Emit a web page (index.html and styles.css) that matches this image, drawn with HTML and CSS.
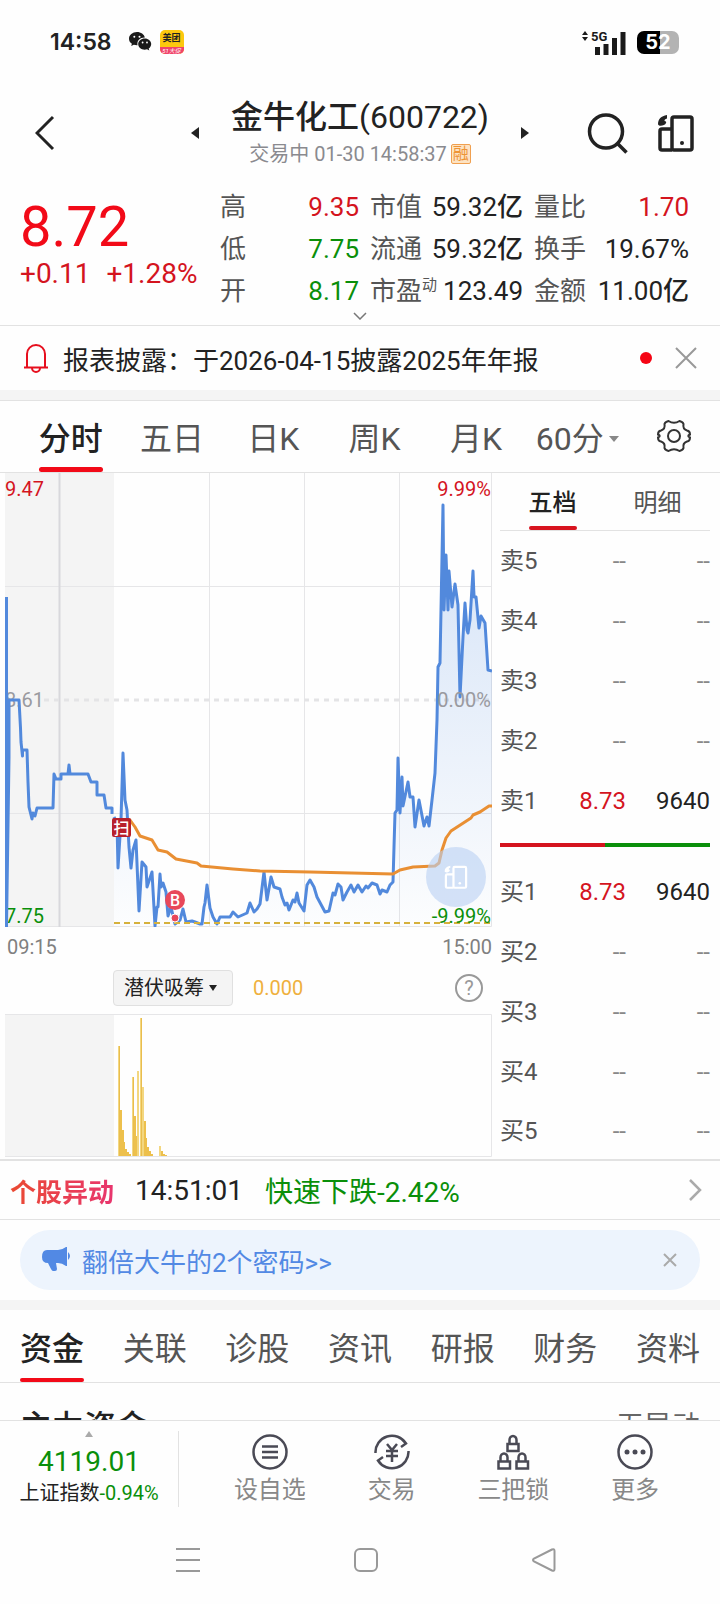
FILE: index.html
```
<!DOCTYPE html>
<html lang="zh-CN">
<head>
    <meta charset="UTF-8">
    <meta name="viewport" content="width=device-width, initial-scale=1.0">
    <title>金牛化工(600722)</title>
    <link rel="stylesheet" href="styles.css">
</head>
<body>
    <div class="status-bar">
        <div class="status-left">
            <span class="clock">14:58</span>
            <svg class="wechat" width="23" height="20" viewBox="0 0 23 20">
                <path d="M8 0C3.500 0 0 3 0 6.700c0 2.100 1.100 3.900 2.900 5.100L2.200 14l2.600-1.300c1 .3 2 .5 3.200.5h.5C7.600 8.700 11 5.500 15.900 5.600 15.200 2.300 11.900 0 8 0z" fill="#1a1a1a"/>
                <path d="M15.700 6.500c-3.700 0-6.500 2.500-6.500 5.600s2.800 5.600 6.500 5.600c.8 0 1.600-.1 2.300-.4l2.300 1.300-.6-2c1.500-1 2.500-2.600 2.500-4.500 0-3.100-2.800-5.600-6.500-5.600z" fill="#1a1a1a"/>
                <circle cx="5.300" cy="4.700" r="1" fill="#fff"/>
                <circle cx="10.500" cy="4.700" r="1" fill="#fff"/>
                <circle cx="13.600" cy="10.500" r=".9" fill="#fff"/>
                <circle cx="18" cy="10.500" r=".9" fill="#fff"/>
            </svg>
            <span class="app-badge"><b>美团</b><i>51大促</i></span>
        </div>
        <div class="status-right">
            <svg width="45" height="27" viewBox="0 0 45 27">
                <path d="M1 6l3-4 3 4zM1 8l3 4 3-4z" fill="#1a1a1a"/>
                <path d="M16.500 26v-8M25 26v-11M33.500 26v-17M42 26V3" stroke="#1a1a1a" stroke-width="5"/>
                <text x="10" y="12" class="net">5G</text>
            </svg>
            <div class="battery"><span>52</span></div>
        </div>
    </div>

    <header class="header">
        <button class="icon-btn back" aria-label="返回">
            <svg width="20" height="36" viewBox="0 0 20 36"><path d="M18 2L2 18l16 16" fill="none" stroke="#222" stroke-width="3"/></svg>
        </button>
        <div class="stock">
            <button class="icon-btn" aria-label="上一只"><svg width="8" height="12" viewBox="0 0 8 12"><path d="M8 0v12L0 6z" fill="#222"/></svg></button>
            <div class="stock-name">
                <h1>金牛化工(600722)</h1>
                <p>交易中 01-30 14:58:37<span class="margin-tag">融</span></p>
            </div>
            <button class="icon-btn" aria-label="下一只"><svg width="8" height="12" viewBox="0 0 8 12"><path d="M0 0v12l8-6z" fill="#222"/></svg></button>
        </div>
        <div class="header-actions">
            <button class="icon-btn" aria-label="搜索">
                <svg width="42" height="42" viewBox="0 0 42 42" fill="none" stroke="#222" stroke-width="3.500"><circle cx="19" cy="19.500" r="16.500"/><path d="M30.500 31.500l9 9"/></svg>
            </button>
            <button class="icon-btn" aria-label="横竖屏">
                <svg width="38" height="38" viewBox="0 0 38 38" fill="none" stroke="#222" stroke-width="3.500">
                    <rect x="15" y="3" width="20" height="33" rx="2"/>
                    <path d="M15 15H5q-2 0-2 2v17q0 2 2 2h10"/>
                    <path d="M1 10c0-5 3-8 9-9v3.500c-2 .5-2.500 1-2.500 2.500 1.500 0 2 1 1.500 2-1 3-8 4-8 1z" fill="#222" stroke="none"/>
                    <circle cx="25" cy="29" r="2" fill="#222" stroke="none"/>
                </svg>
            </button>
        </div>
    </header>

    <section class="quote">
        <div class="quote-main">
            <div class="price-box">
                <div class="price">8.72</div>
                <div class="change"><span>+0.11</span><span>+1.28%</span></div>
            </div>
            <dl class="stats">
                <div><dt>高</dt><dd class="red">9.35</dd></div>
                <div><dt>低</dt><dd class="green">7.75</dd></div>
                <div><dt>开</dt><dd class="green">8.17</dd></div>
                <div><dt>市值</dt><dd>59.32亿</dd></div>
                <div><dt>流通</dt><dd>59.32亿</dd></div>
                <div><dt>市盈<sup>动</sup></dt><dd>123.49</dd></div>
                <div><dt>量比</dt><dd class="red">1.70</dd></div>
                <div><dt>换手</dt><dd>19.67%</dd></div>
                <div><dt>金额</dt><dd>11.00亿</dd></div>
            </dl>
        </div>
        <button class="icon-btn expand" aria-label="展开"><svg width="14" height="8" viewBox="0 0 14 8"><path d="M1 1l6 6 6-6" fill="none" stroke="#777" stroke-width="1.500"/></svg></button>
    </section>

    <section class="notice">
        <svg width="26" height="30" viewBox="0 0 26 30" fill="none" stroke="#e60f1e" stroke-width="2">
            <path d="M4 24V11a9 9 0 0 1 18 0v13M1 24.500h24M9 25a4 4 0 0 0 8 0"/>
        </svg>
        <p>报表披露：于2026-04-15披露2025年年报</p>
        <span class="dot"></span>
        <button class="icon-btn" aria-label="关闭"><svg width="22" height="22" viewBox="0 0 22 22"><path d="M1 1l20 20M21 1L1 21" stroke="#999" stroke-width="2"/></svg></button>
    </section>

    <nav class="period-tabs">
        <button class="tab active">分时</button>
        <button class="tab">五日</button>
        <button class="tab">日K</button>
        <button class="tab">周K</button>
        <button class="tab">月K</button>
        <label class="period-select">
            <select aria-label="分钟周期">
                <option>60分</option>
            </select>
        </label>
        <button class="icon-btn" aria-label="设置">
            <svg width="36" height="36" viewBox="0 0 36 36" fill="none" stroke="#333" stroke-width="2">
                <path d="M12.500 3Q18 6.500 23.500 3Q27 4 27.500 6Q26.500 11 31 12.500Q34 13 34 16.500Q30.500 18 34 19.500Q34 23 31 23.500Q26.500 25 27.500 30Q27 32 23.500 33Q18 29.500 12.500 33Q9 32 8.500 30Q9.500 25 5 23.500Q2 23 2 19.500Q5.500 18 2 16.500Q2 13 5 12.500Q9.500 11 8.500 6Q9 4 12.500 3z"/>
                <circle cx="18" cy="18" r="6"/>
            </svg>
        </button>
    </nav>

    <main class="market">
        <div class="charts">
            <div class="price-chart">
                <svg viewBox="0 0 487 454">
                    <defs>
                        <linearGradient id="area" x1="0" y1="32" x2="0" y2="454" gradientUnits="userSpaceOnUse">
                            <stop offset="0" stop-color="#4c89e0" stop-opacity=".24"/>
                            <stop offset="1" stop-color="#4c89e0" stop-opacity=".01"/>
                        </linearGradient>
                    </defs>
                    <rect width="109" height="454" fill="#f4f4f4"/>
                    <path class="grid" d="M0 113.500H487M0 340.500H487M204.500 0V454M299.500 0V454M394.500 0V454"/>
                    <path class="grid" d="M486.500 0V453.500H0"/>
                    <path d="M54.500 0V454" stroke="#d8d8dc" stroke-width="2"/>
                    <path d="M39 227H487" stroke="#e4e4e6" stroke-width="3" stroke-dasharray="5 5"/>
                    <text class="axis muted" x="0" y="234">8.61</text>
                    <text class="axis green" x="0" y="450">7.75</text>
                    <path fill="url(#area)" d="M109 454V344L112 350L113 395L116 347L118 280L120 327L122 337L124 374L126 395L128 377L131 367L134 438L137 389L141 394L142 414L147 399L150 453L152 434L155 401L161 419L163 443L170 451L178 436L181 449L197 451L202 412L208 444L212 451L225 444L242 440L255 431L259 399L262 427L266 404L275 416L284 437L292 420L299 438L305 407L320 439L333 411L338 427L346 412L375 421L388 409L390 340L393 285L395 340L397 304L398 333L403 309L408 324L410 354L414 327L419 353L424 353L430 300L433 194L435 190L438 32L439 137L441 82L443 137L444 98L447 134L450 111L453 132L455 224L460 130L463 160L468 98L474 155L476 143L480 150L483 197L487 198V454z"/>
                    <g fill="none" stroke-linejoin="round">
                        <path class="line" d="M1.500 124V454L4 284V227H14L15.500 255L16 269L17.500 283V277H22L23 309L24 334L27 346L28 340L30 343L32 335H48L49 301L51 306H56V301H63L64 292L65 301H83L86 309H92V322H99L101 335H107V341"/>
                        <path class="line" d="M109 344L112 350L113 395L116 347L118 280L120 327L122 337L124 374L126 395L128 377L131 367L134 438L137 389L141 394L142 414L147 399L150 453L152 434H153L155 401L156 414L158 410L161 419L163 443L166 434L170 451L175 447L178 436L181 449L187 448L190 449L195 451H197L199 434L200 430L202 412L205 435L208 444L212 451L215 444L225 444L228 439L233 444L242 440L245 430L249 439L252 436L255 431L259 399L262 427L266 404L269 414L275 416L277 424L280 432L282 430L284 437L288 427L290 429L292 420L294 430L299 438L302 412L305 407L309 414L312 424L320 439L324 438L328 420L330 422L333 411L336 414L338 427L342 419L346 412L349 419L353 412L357 419L361 413L363 415L367 410L372 412L375 421L377 417L382 419L385 412L388 409L389 374L390 340L392 337L393 285L395 340L397 304L398 333L403 309L405 324H408L410 354L414 327L419 353L422 344L424 353L427 327L430 300L432 247L433 194L435 190L438 32L439 137L441 82L443 137L444 98L447 134L450 111L453 132L455 224L458 164L460 130L462 157L463 160L465 147L468 98L469 124H471L474 155L476 143L480 150L483 197L487 198"/>
                        <path d="M109 348L125 347L130 354L135 363L147 367L153 377L162 379L171 386L192 390L196 393L228 396L255 398L305 399L388 401L395 397L408 394L430 393L434 390L437 377L441 365L446 358L466 345L468 342L475 339L484 333H487" stroke="#e98f33" stroke-width="3"/>
                    </g>
                    <path d="M109 450H487" stroke="#d6b13c" stroke-width="2" stroke-dasharray="6 4"/>
                    <text class="axis red" x="0" y="23">9.47</text>
                    <text class="axis red end" x="486" y="23">9.99%</text>
                    <text class="axis muted end" x="486" y="234">0.00%</text>
                    <text class="axis green end" x="486" y="450">-9.99%</text>
                    <rect x="107" y="345" width="19" height="19" rx="2" fill="#b8202c"/>
                    <text class="mark" x="116.500" y="361">扫</text>
                    <circle cx="170" cy="427" r="10" fill="#e8485a"/>
                    <text class="mark" x="170" y="433">B</text>
                    <circle cx="170" cy="445" r="4" fill="#e8485a" stroke="#fff"/>
                </svg>
                <button class="float-btn" aria-label="横屏">
                    <svg width="24" height="24" viewBox="0 0 38 38" fill="none" stroke="#fff" stroke-width="3.500">
                        <rect x="15" y="3" width="20" height="33" rx="2"/>
                        <path d="M15 15H5q-2 0-2 2v17q0 2 2 2h10"/>
                        <path d="M1 10c0-5 3-8 9-9v3.500c-2 .5-2.500 1-2.500 2.500 1.500 0 2 1 1.500 2-1 3-8 4-8 1z" fill="#fff" stroke="none"/>
                        <circle cx="25" cy="29" r="2" fill="#fff" stroke="none"/>
                    </svg>
                </button>
            </div>
            <div class="time-axis"><span>09:15</span><span>15:00</span></div>
            <div class="indicator">
                <label class="indicator-select">
                    <select aria-label="指标">
                        <option>潜伏吸筹</option>
                    </select>
                </label>
                <span class="indicator-value">0.000</span>
                <button class="icon-btn help" aria-label="帮助">?</button>
            </div>
            <svg class="volume" viewBox="0 0 487 143">
                <rect width="109" height="143" fill="#f4f4f4"/>
                <path class="grid" d="M0 .5H486.500V142.500H0"/>
                <path d="M114 32V142M128 63V142M133 57V142M136 4V142M138 73V142M155 132V142" stroke="#f3d780" stroke-width="2"/>
                <path d="M116 96V142M118 116V142M119 128V142M121 135V142M123 138V142M125 140V142M130 102V142M131 122V142M140 107V142M141 124V142M143 133V142M145 137V142M147 140V142M157 137V142M159 140V142M161 141V142" stroke="#edc04c" stroke-width="2"/>
                <path d="M114.500 32V142M128.500 63V142M136.500 4V142" stroke="#e9bd4e"/>
            </svg>
        </div>

        <aside class="order-book">
            <div class="book-tabs">
                <button class="tab active">五档</button>
                <button class="tab">明细</button>
            </div>
            <table>
                <tr><th>卖5</th><td>--</td><td>--</td></tr>
                <tr><th>卖4</th><td>--</td><td>--</td></tr>
                <tr><th>卖3</th><td>--</td><td>--</td></tr>
                <tr><th>卖2</th><td>--</td><td>--</td></tr>
                <tr><th>卖1</th><td class="red">8.73</td><td class="qty">9640</td></tr>
            </table>
            <div class="ratio"><i style="width: 50%"></i></div>
            <table>
                <tr><th>买1</th><td class="red">8.73</td><td class="qty">9640</td></tr>
                <tr><th>买2</th><td>--</td><td>--</td></tr>
                <tr><th>买3</th><td>--</td><td>--</td></tr>
                <tr><th>买4</th><td>--</td><td>--</td></tr>
                <tr><th>买5</th><td>--</td><td>--</td></tr>
            </table>
        </aside>
    </main>

    <a class="alert" href="#">
        <strong>个股异动</strong>
        <span>14:51:01</span>
        <span class="green">快速下跌-2.42%</span>
        <svg width="14" height="24" viewBox="0 0 14 24"><path d="M2 2l10 10L2 22" fill="none" stroke="#aaa" stroke-width="2.500"/></svg>
    </a>

    <section class="promo">
        <svg width="30" height="26" viewBox="0 0 30 26" fill="#5289e4">
            <path d="M5 3h11q4 0 8-3h1v19h-1q-4-3-8-3h-2l1 6q0 2-2 2h-2q-1 0-2-2l-3-6Q0 16 0 10 0 3 5 3z"/>
            <path d="M26 5q4 4 0 8z"/>
        </svg>
        <a href="#">翻倍大牛的2个密码&gt;&gt;</a>
        <button class="icon-btn" aria-label="关闭"><svg width="14" height="14" viewBox="0 0 14 14"><path d="M1 1l12 12M13 1L1 13" stroke="#aaa" stroke-width="2"/></svg></button>
    </section>

    <nav class="info-tabs">
        <button class="tab active">资金</button>
        <button class="tab">关联</button>
        <button class="tab">诊股</button>
        <button class="tab">资讯</button>
        <button class="tab">研报</button>
        <button class="tab">财务</button>
        <button class="tab">资料</button>
    </nav>

    <section class="funds">
        <h2>主力资金</h2>
        <span>无异动</span>
    </section>

    <footer class="bottom-bar">
        <a class="index" href="#">
            <svg width="8" height="6" viewBox="0 0 8 6"><path d="M4 0l4 6H0z" fill="#aaa"/></svg>
            <b>4119.01</b>
            <span>上证指数<em>-0.94%</em></span>
        </a>
        <div class="actions">
            <button class="action">
                <svg width="36" height="36" viewBox="0 0 36 36"><circle cx="18" cy="18" r="16.500"/><path d="M10 12.500h16M10 18h16M10 23.500h16"/></svg>
                设自选
            </button>
            <button class="action">
                <svg width="36" height="36" viewBox="0 0 36 36"><path d="M1.500 19A16.500 16.500 0 0 1 32 9.500L27 13M34.500 17A16.500 16.500 0 0 1 4 26.500L9 23M13 10l5 6 5-6M18 16v12M12 17h12M12 22h12"/></svg>
                交易
            </button>
            <button class="action">
                <svg width="36" height="36" viewBox="0 0 36 36"><path d="M12.500 10h11v7h-11zM14.500 10V6a3.500 4 0 0 1 7 0v4M3.500 27.500h11.500v7H3.500zM5.500 27.500v-4a3.500 4 0 0 1 7 0v4M21.500 27.500H33v7H21.500zM23.500 27.500v-4a3.500 4 0 0 1 7 0v4"/></svg>
                三把锁
            </button>
            <button class="action">
                <svg width="36" height="36" viewBox="0 0 36 36"><circle cx="18" cy="18" r="16.500"/><g fill="#4a4a55" stroke="none"><circle cx="10" cy="18" r="2.500"/><circle cx="18" cy="18" r="2.500"/><circle cx="26" cy="18" r="2.500"/></g></svg>
                更多
            </button>
        </div>
    </footer>

    <div class="system-nav">
        <button class="icon-btn" aria-label="菜单"><svg width="24" height="24" viewBox="0 0 24 24"><path d="M0 1h24M0 12h24M0 23h24"/></svg></button>
        <button class="icon-btn" aria-label="主页"><svg width="24" height="24" viewBox="0 0 24 24"><rect x="1" y="1" width="22" height="22" rx="5"/></svg></button>
        <button class="icon-btn" aria-label="后退"><svg width="24" height="24" viewBox="0 0 24 24"><path d="M20 1.500L2 10.500q-2 1.500 0 3l18 9q2.500 1 2.500-1.500V3q0-2.500-2.500-1.500z"/></svg></button>
    </div>
</body>
</html>
```

FILE: styles.css
```
* {
    box-sizing: border-box;
}
body {
    margin: 0;
    background: #fefefe;
    color: #222;
    font-family: Roboto, "Noto Sans CJK SC", sans-serif;
}
h1, h2, p, dl, dt, dd {
    margin: 0;
}
button, select {
    padding: 0;
    border: none;
    background: none;
    color: inherit;
    font: inherit;
    cursor: pointer;
}
a {
    color: inherit;
    text-decoration: none;
}
svg {
    display: block;
    flex: none;
}
.icon-btn {
    display: flex;
    align-items: center;
    justify-content: center;
}
.red {
    color: #d4141e;
    fill: #d4141e;
}
.green {
    color: #0a8f0a;
    fill: #0a8f0a;
}

/* status bar */
.status-bar {
    display: flex;
    justify-content: space-between;
    align-items: center;
    height: 84px;
    padding: 0 41px 0 50px;
}
.status-left, .status-right {
    display: flex;
    align-items: center;
}
.clock {
    margin-right: 17px;
    font: 600 23px/30px Inter, sans-serif;
}
.app-badge {
    display: flex;
    flex-direction: column;
    width: 24px;
    height: 24px;
    margin-left: 8px;
    border-radius: 5px;
    overflow: hidden;
    background: #fcc80e;
    text-align: center;
}
.app-badge b {
    font-size: 9px;
    line-height: 17px;
}
.app-badge i {
    background: #f0436a;
    color: #fff;
    font-size: 6px;
    line-height: 7px;
    white-space: nowrap;
}
.net {
    font: 700 13px Roboto, sans-serif;
    fill: #1a1a1a;
}
.battery {
    width: 42px;
    height: 23px;
    margin-left: 11px;
    border-radius: 7px;
    background: linear-gradient(90deg, #000 55%, #b3b3b3 55%);
    color: #fff;
    font: 700 20px/23px Inter, sans-serif;
    text-align: center;
}

/* header */
.header {
    display: grid;
    grid-template-columns: 1fr auto 1fr;
    align-items: center;
    height: 98px;
    padding: 0 25px 0 35px;
}
.back {
    justify-self: start;
}
.stock {
    display: flex;
    align-items: center;
    gap: 32px;
    margin-right: 10px;
}
.stock-name {
    text-align: center;
    white-space: nowrap;
}
.stock-name h1 {
    font-size: 32px;
    font-weight: 450;
    line-height: 42px;
}
.stock-name p {
    display: flex;
    justify-content: center;
    align-items: center;
    gap: 4px;
    color: #8a8a8f;
    font-size: 20px;
    line-height: 32px;
}
.margin-tag {
    width: 20px;
    height: 20px;
    border: 1px solid #f0a050;
    border-radius: 2px;
    background: #fde3c3;
    color: #ee9436;
    font-size: 16px;
    line-height: 18px;
}
.header-actions {
    display: flex;
    justify-content: flex-end;
    gap: 28px;
}

/* quote */
.quote {
    height: 144px;
    padding-top: 4px;
    border-bottom: 1px solid #e2e2e2;
}
.quote-main {
    display: flex;
    height: 126px;
    padding: 0 31px 0 20px;
}
.price-box {
    flex: none;
    width: 200px;
    padding-top: 8px;
    color: #d4141e;
    font-weight: 450;
}
.price {
    color: #f20a18;
    font-size: 56px;
    line-height: 66px;
}
.change {
    display: flex;
    gap: 16px;
    font-size: 28px;
    line-height: 28px;
    white-space: nowrap;
}
.stats {
    display: grid;
    flex: 1;
    grid-template-rows: repeat(3, 42px);
    grid-template-columns: 139fr 153fr 155fr;
    grid-auto-flow: column;
    column-gap: 11px;
    font-size: 26px;
    line-height: 42px;
    white-space: nowrap;
}
.stats div {
    display: flex;
    justify-content: space-between;
}
.stats dt {
    color: #555;
}
.stats dd {
    font-weight: 450;
}
.stats sup {
    font-size: 15px;
    line-height: 0;
}
.expand {
    margin: 0 auto;
}

/* report notice */
.notice {
    display: flex;
    align-items: center;
    height: 64px;
    padding: 0 23px;
    font-size: 26px;
}
.notice p {
    flex: 1;
    margin-left: 14px;
}
.dot {
    width: 12px;
    height: 12px;
    margin-right: 23px;
    border-radius: 50%;
    background: #f50514;
}

/* tabs */
.tab {
    position: relative;
    color: #555;
    white-space: nowrap;
}
.tab.active {
    color: #222;
    font-weight: 500;
}
.tab.active::after {
    content: "";
    position: absolute;
    right: 0;
    bottom: 0;
    left: 0;
    height: 5px;
    border-radius: 3px;
    background: #f20a18;
}
.period-tabs {
    display: grid;
    grid-template-columns: repeat(6, 1fr) 92px;
    justify-items: center;
    align-items: stretch;
    height: 83px;
    padding-left: 20px;
    border-top: 10px solid #f4f4f4;
    border-bottom: 1px solid #e2e2e2;
    box-shadow: inset 0 1px #e2e2e2;
    font-size: 32px;
}
.period-tabs .tab, .info-tabs .tab {
    padding-top: 6px;
    line-height: 66px;
}
.period-select, .indicator-select {
    display: flex;
    align-items: center;
}
.period-select {
    padding-top: 6px;
    color: #555;
}
.period-select select, .indicator-select select {
    appearance: none;
}
.period-select::after, .indicator-select::after {
    content: "";
    margin-left: 5px;
    border: 5px solid transparent;
    border-top: 6px solid #888;
    border-bottom: none;
}

/* charts */
.market {
    display: flex;
    gap: 8px;
    padding: 0 10px 0 5px;
    border-bottom: 2px solid #e2e2e2;
}
.charts {
    flex: 1;
}
.price-chart {
    position: relative;
}
.price-chart svg, .volume {
    width: 100%;
}
.grid {
    fill: none;
    stroke: #e6e6e8;
}
.line {
    stroke: #5289dc;
    stroke-width: 3;
}
.axis {
    font-size: 20px;
}
.end {
    text-anchor: end;
}
.muted {
    fill: #9a9a9f;
}
.mark {
    fill: #fff;
    font-size: 16px;
    font-weight: 500;
    text-anchor: middle;
}
.float-btn {
    position: absolute;
    right: 6px;
    bottom: 20px;
    width: 60px;
    height: 60px;
    padding: 18px;
    border-radius: 50%;
    background: rgba(185, 209, 244, 0.6);
}
.time-axis {
    display: flex;
    justify-content: space-between;
    padding-left: 2px;
    color: #808080;
    font-size: 20px;
    line-height: 40px;
}
.indicator {
    display: flex;
    align-items: center;
    height: 47px;
    padding: 0 9px 6px 108px;
    font-size: 20px;
}
.indicator-select {
    height: 36px;
    padding: 0 15px 0 10px;
    border: 1px solid #e0e0e0;
    border-radius: 4px;
    background: #f4f4f4;
}
.indicator-select select {
    line-height: 28px;
}
.indicator-select::after {
    border-width: 6px 4px 0;
    border-top-color: #222;
}
.indicator-value {
    flex: 1;
    margin-left: 20px;
    color: #efb03d;
}
.help {
    width: 28px;
    height: 28px;
    border: 2px solid #999;
    border-radius: 50%;
    color: #999;
}

/* order book */
.order-book {
    flex: none;
    width: 210px;
}
.book-tabs {
    display: flex;
    justify-content: space-around;
    height: 58px;
    border-bottom: 1px solid #e2e2e2;
    font-size: 24px;
}
.book-tabs .tab {
    padding-bottom: 2px;
}
.book-tabs .tab.active::after {
    height: 4px;
    background: #d8141f;
}
.order-book table {
    width: 100%;
    border-collapse: collapse;
    table-layout: fixed;
    font-size: 24px;
    line-height: 30px;
}
.order-book tr {
    height: 60px;
}
.order-book th, .order-book td {
    padding: 0;
    text-align: right;
}
.order-book th {
    width: 50px;
    color: #555;
    font-weight: inherit;
    text-align: left;
}
.order-book td {
    color: #888;
}
.order-book td:last-child {
    width: 84px;
}
.order-book .red {
    color: #d4141e;
}
.order-book .qty {
    color: #222;
}
.ratio {
    height: 4px;
    margin: 12px 0 15px;
    background: #0a8f0a;
}
.ratio i {
    display: block;
    height: 4px;
    background: #d4141e;
}
.order-book table:last-child tr:last-child {
    height: 57px;
}

/* stock alert and promo */
.alert {
    display: flex;
    align-items: center;
    height: 59px;
    padding: 0 18px 0 10px;
    border-bottom: 1px solid #e2e2e2;
    font-size: 28px;
}
.alert strong {
    margin-right: 21px;
    background: linear-gradient(90deg, #ea4a32, #e8356e);
    background-clip: text;
    color: transparent;
    font-size: 26px;
}
.alert .green {
    flex: 1;
    margin-left: 22px;
}
.promo {
    display: flex;
    align-items: center;
    height: 60px;
    margin: 10px 20px;
    padding: 0 23px 0 22px;
    border-radius: 30px;
    background: #edf4fd;
    color: #5289e4;
    font-size: 26px;
}
.promo a {
    flex: 1;
    margin-left: 10px;
}

/* info tabs */
.info-tabs {
    display: flex;
    justify-content: space-between;
    height: 83px;
    padding: 0 20px;
    border-top: 10px solid #f4f4f4;
    border-bottom: 1px solid #e2e2e2;
    font-size: 32px;
}
.info-tabs .tab.active::after {
    height: 4px;
}
.funds {
    display: flex;
    justify-content: space-between;
    height: 37px;
    padding: 22px 20px 0 20px;
    overflow: hidden;
}
.funds h2 {
    font-size: 32px;
    font-weight: 500;
    line-height: 44px;
}
.funds span {
    color: #666;
    font-size: 28px;
    line-height: 44px;
}

/* bottom bar */
.bottom-bar {
    display: flex;
    height: 98px;
    border-top: 1px solid #e2e2e2;
    background: #fefefe;
}
.index {
    display: flex;
    flex-direction: column;
    align-items: center;
    width: 179px;
    height: 76px;
    margin-top: 10px;
    border-right: 1px solid #e2e2e2;
    font-size: 20px;
    line-height: 28px;
}
.index b {
    margin: 9px 0 1px;
    color: #0a8f0a;
    font-size: 28px;
    font-weight: inherit;
    line-height: 32px;
}
.index em {
    color: #0a8f0a;
    font-style: normal;
}
.actions {
    display: grid;
    flex: 1;
    grid-template-columns: repeat(4, 1fr);
    padding: 13px 24px 0 30px;
}
.action {
    display: flex;
    flex-direction: column;
    align-items: center;
    gap: 2px;
    color: #888;
    font-size: 24px;
    line-height: 36px;
}
.action svg {
    fill: none;
    stroke: #4a4a55;
    stroke-width: 2.5;
}
.system-nav {
    display: grid;
    grid-template-columns: repeat(3, 1fr);
    height: 86px;
    padding: 0 87px 3px 99px;
}
.system-nav svg {
    fill: none;
    stroke: #999;
    stroke-width: 2;
}
```
